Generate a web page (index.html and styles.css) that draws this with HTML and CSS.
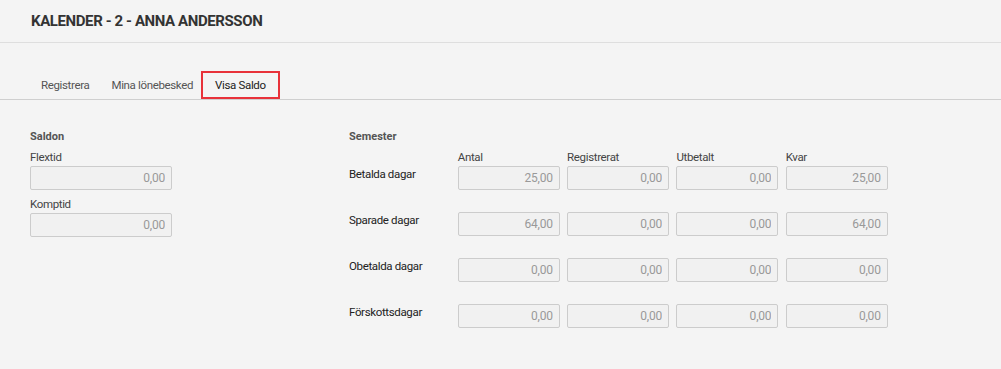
FILE: index.html
```html
<!DOCTYPE html>
<html lang="sv">
<head>
    <meta charset="UTF-8">
    <meta name="viewport" content="width=device-width, initial-scale=1.0">
    <title>Kalender - Visa Saldo</title>
    <link rel="stylesheet" href="styles.css">
</head>
<body>
    <div class="header">
        <h1>KALENDER - 2 - ANNA ANDERSSON</h1>
    </div>

    <!-- Flikar -->
    <ul class="tabs">
        <li>Registrera</li>
        <li>Mina lönebesked</li>
        <li class="active">Visa Saldo</li>
    </ul>

    <div class="content">
        <!-- Saldon -->
        <div class="saldon">
            <h2>Saldon</h2>
            <label>Flextid</label>
            <input type="text" value="0,00" readonly>
            <label>Komptid</label>
            <input type="text" value="0,00" readonly>
        </div>

        <!-- Semester -->
        <div class="semester">
            <h2>Semester</h2>
            <div class="grid">
                <span></span>
                <span class="col-head">Antal</span>
                <span class="col-head">Registrerat</span>
                <span class="col-head">Utbetalt</span>
                <span class="col-head">Kvar</span>

                <span class="row-label">Betalda dagar</span>
                <input type="text" value="25,00" readonly>
                <input type="text" value="0,00" readonly>
                <input type="text" value="0,00" readonly>
                <input type="text" value="25,00" readonly>

                <span class="row-label">Sparade dagar</span>
                <input type="text" value="64,00" readonly>
                <input type="text" value="0,00" readonly>
                <input type="text" value="0,00" readonly>
                <input type="text" value="64,00" readonly>

                <span class="row-label">Obetalda dagar</span>
                <input type="text" value="0,00" readonly>
                <input type="text" value="0,00" readonly>
                <input type="text" value="0,00" readonly>
                <input type="text" value="0,00" readonly>

                <span class="row-label">Förskottsdagar</span>
                <input type="text" value="0,00" readonly>
                <input type="text" value="0,00" readonly>
                <input type="text" value="0,00" readonly>
                <input type="text" value="0,00" readonly>
            </div>
        </div>
    </div>
</body>
</html>
```

FILE: styles.css
```css
body {
    font-family: Roboto, "Liberation Sans", sans-serif;
    font-size: 11.5px;
    letter-spacing: -0.35px;
    line-height: 14px;
    color: #444;
    margin: 0;
    padding: 0;
    background-color: #f4f4f4;
}

.header {
    height: 42px;
    padding: 0 31px;
    display: flex;
    align-items: center;
    border-bottom: 1px solid #dedede;
}

h1 {
    margin: 0;
    font-size: 15px;
    font-weight: 700;
    color: #333;
    letter-spacing: -0.4px;
}

.tabs {
    list-style: none;
    margin: 28px 0 0;
    padding: 0 0 0 30px;
    display: flex;
    border-bottom: 1px solid #cfcfcf;
}

.tabs li {
    height: 28px;
    line-height: 28px;
    padding: 0 11px;
    color: #555;
}

.tabs li.active {
    box-sizing: border-box;
    margin-left: -3px;
    padding: 0 12px;
    border: 2px solid #e8323a;
    line-height: 24px;
    color: #222;
}

.content {
    display: flex;
    padding: 30px 30px 0;
}

h2 {
    margin: 0 0 7px;
    font-size: 11px;
    line-height: 13px;
    font-weight: 700;
    letter-spacing: 0;
    color: #555;
}

.saldon {
    width: 142px;
    display: flex;
    flex-direction: column;
}

.saldon label {
    margin-bottom: 2px;
}

.saldon input {
    margin-bottom: 7px;
}

.semester {
    margin-left: 177px;
}

.grid {
    display: grid;
    grid-template-columns: 101.5px repeat(4, 102px);
    column-gap: 7.3px;
    align-items: start;
}

.grid .col-head {
    margin-bottom: 2px;
}

.grid input,
.row-label {
    margin-bottom: 22px;
}

.row-label {
    color: #222;
    padding-top: 1px;
}

input {
    box-sizing: border-box;
    width: 100%;
    height: 24px;
    margin: 0;
    padding: 0 6px;
    font-family: Roboto, "Liberation Sans", sans-serif;
    font-size: 12px;
    letter-spacing: -0.2px;
    color: #999;
    text-align: right;
    background-color: #f1f1f1;
    border: 1px solid #cccccc;
    border-radius: 2px;
    outline: none;
}
```
